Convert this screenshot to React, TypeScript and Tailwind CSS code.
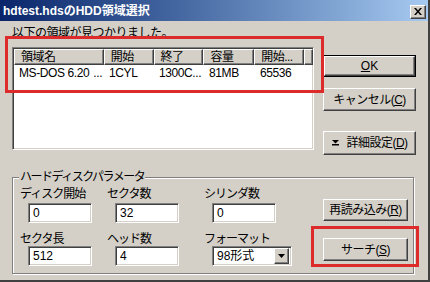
import React from "react";

const font = { fontFamily: '"Liberation Sans", "Noto Sans CJK JP", sans-serif' };

const raised =
  "border border-t-white border-l-white border-r-[#404040] border-b-[#404040] shadow-[inset_-1px_-1px_#808080] bg-[#d4d0c8]";
const sunken =
  "border border-t-[#808080] border-l-[#808080] border-r-white border-b-white shadow-[inset_1px_1px_#404040,inset_-1px_-1px_#d4d0c8] bg-white";

function Btn({ children, className = "" }: { children: React.ReactNode; className?: string }) {
  return (
    <div className={`${raised} flex items-center justify-center text-[12px] leading-[14px] text-black ${className}`}>
      {children}
    </div>
  );
}

function Field({ value, className = "" }: { value: string; className?: string }) {
  return (
    <div className={`${sunken} h-[20px] flex items-center pl-[4px] text-[12px] leading-[14px] ${className}`}>
      {value}
    </div>
  );
}

const columns = [
  { label: "領域名", w: 90, value: "MS-DOS 6.20" },
  { label: "開始", w: 50, value: "1CYL" },
  { label: "終了", w: 50, value: "1300C..." },
  { label: "容量", w: 51, value: "81MB" },
  { label: "開始...", w: 50, value: "65536" },
];

export default function App() {
  return (
    <div
      className="relative w-[430px] h-[282px] bg-[#d4d0c8] flex flex-col border-r-2 border-b-2 border-r-[#404040] border-b-[#404040] overflow-hidden"
      style={font}
    >
      {/* title bar */}
      <div className="h-[21px] flex items-center justify-between pl-[3px] pr-[2px] bg-gradient-to-r from-[#0a246a] to-[#a6caf0]">
        <span className="text-white font-bold text-[12px] leading-[14px]">hdtest.hdsのHDD領域選択</span>
        <div className={`${raised} w-[16px] h-[14px] flex items-center justify-center mt-[2px]`}>
          <svg width="8" height="7" viewBox="0 0 8 7">
            <path d="M0 0h2l2 2.5L6 0h2L5 3.5 8 7H6L4 4.5 2 7H0l3-3.5z" fill="black" />
          </svg>
        </div>
      </div>

      <div className="flex-1 px-[12px] pt-[5px]">
        <div className="flex">
          <div className="w-[302px] flex flex-col">
            <div className="h-[16px] text-[12px] leading-[14px] tracking-[-0.5px]">以下の領域が見つかりました。</div>
            <div className={`${sunken} mt-[5px] h-[103px] flex flex-col`}>
              <div className="flex h-[16px] ml-[1px] mt-[1px]">
                {columns.map((c) => (
                  <div
                    key={c.label}
                    className={`${raised} flex items-center pl-[6px] text-[12px] leading-[14px] tracking-[-0.5px]`}
                    style={{ width: c.w }}
                  >
                    {c.label}
                  </div>
                ))}
                <div className={`${raised} w-[9px]`} />
              </div>
              <div className="flex h-[15px] items-center ml-[1px]">
                {columns.map((c, i) => (
                  <div
                    key={c.label}
                    className="pl-[5px] text-[12px] leading-[14px] whitespace-nowrap flex overflow-hidden tracking-[-0.4px]"
                    style={{ width: c.w }}
                  >
                    <span>{c.value}</span>
                    {i === 0 && <span className="ml-[4px]">...</span>}
                  </div>
                ))}
              </div>
            </div>
          </div>

          <div className="ml-[9px] w-[93px] flex flex-col pt-[29px]">
            <div className="border border-black h-[22px] flex">
              <Btn className="flex-1">
                <span>
                  <span className="underline">O</span>K
                </span>
              </Btn>
            </div>
            <Btn className="h-[23px] mt-[11px] tracking-[-0.5px]">
              <span>
                キャンセル(<span className="underline">C</span>)
              </span>
            </Btn>
            <Btn className="h-[24px] mt-[20px] gap-[6px] tracking-[-0.5px]">
              <svg width="9" height="6" viewBox="0 0 9 6">
                <path d="M1 0h7L4.5 3.5z" fill="black" />
                <rect x="1" y="4" width="7" height="1.5" fill="black" />
              </svg>
              <span>
                詳細設定(<span className="underline">D</span>)
              </span>
            </Btn>
          </div>
        </div>

        {/* group box */}
        <div className="relative mt-[22px] w-[402px] h-[97px] border border-[#808080] shadow-[inset_1px_1px_white,1px_1px_white] flex">
          <span className="absolute left-[6px] top-[-8px] bg-[#d4d0c8] px-[1px] text-[12px] leading-[14px] tracking-[-1.5px]">
            ハードディスクパラメータ
          </span>
          <div className="flex pl-[7px] pt-[9px] text-[12px] leading-[14px] tracking-[-1px]">
            <div className="w-[87px] flex flex-col">
              <div className="h-[16px]">ディスク開始</div>
              <Field value="0" className="ml-[8px] w-[64px] tracking-normal" />
              <div className="h-[20px] mt-[3px] flex items-end">セクタ長</div>
              <Field value="512" className="ml-[8px] w-[64px] tracking-normal" />
            </div>
            <div className="w-[97px] flex flex-col">
              <div className="h-[16px]">セクタ数</div>
              <Field value="32" className="ml-[8px] w-[64px] tracking-normal" />
              <div className="h-[20px] mt-[3px] flex items-end">ヘッド数</div>
              <Field value="4" className="ml-[8px] w-[64px] tracking-normal" />
            </div>
            <div className="w-[96px] flex flex-col">
              <div className="h-[16px]">シリンダ数</div>
              <Field value="0" className="ml-[8px] w-[64px] tracking-normal" />
              <div className="h-[20px] mt-[3px] flex items-end">フォーマット</div>
              <div className={`${sunken} ml-[8px] w-[80px] h-[20px] flex items-center justify-between pl-[4px] pr-[2px] tracking-normal`}>
                <span>98形式</span>
                <div className={`${raised} w-[15px] h-[16px] flex items-center justify-center`}>
                  <svg width="7" height="4" viewBox="0 0 7 4">
                    <path d="M0 0h7L3.5 4z" fill="black" />
                  </svg>
                </div>
              </div>
            </div>
          </div>
          <div className="ml-auto mr-[5px] w-[85px] flex flex-col pt-[21px]">
            <Btn className="h-[22px] tracking-[-0.5px]">
              <span>
                再読み込み(<span className="underline">R</span>)
              </span>
            </Btn>
            <Btn className="h-[23px] mt-[17px] tracking-[-0.5px]">
              <span>
                サーチ(<span className="underline">S</span>)
              </span>
            </Btn>
          </div>
        </div>
      </div>

      {/* red highlight overlays */}
      <div className="absolute left-[5px] top-[36px] w-[319px] h-[57px] border-[3px] border-[#dd2a2a] pointer-events-none" />
      <div className="absolute left-[311px] top-[226px] w-[108px] h-[41px] border-[3px] border-[#dd2a2a] pointer-events-none" />
    </div>
  );
}
